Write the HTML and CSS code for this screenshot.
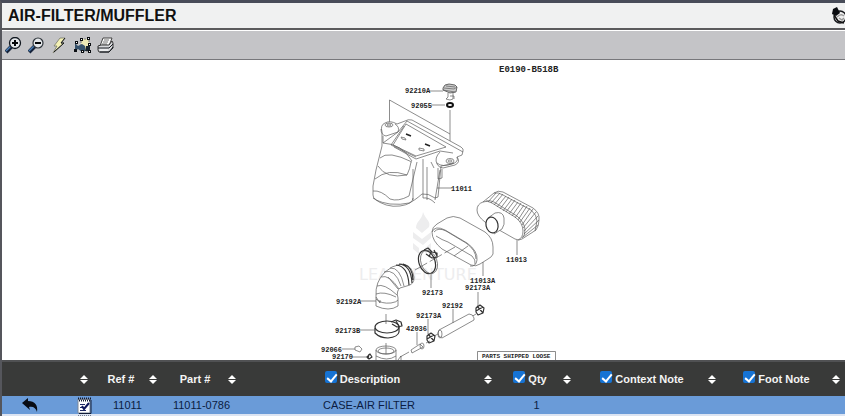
FILE: index.html
```html
<!DOCTYPE html>
<html lang="en">
<head>
<meta charset="utf-8">
<title>AIR-FILTER/MUFFLER</title>
<link rel="stylesheet" href="styles.css">
</head>
<body>
<svg class="defs" aria-hidden="true">
  <symbol id="sort" viewBox="0 0 8 9"><path d="M4 0 8 4H0zM0 5h8L4 9z" fill="#fff"/></symbol>
  <symbol id="note" viewBox="0 0 15 17">
    <path d="M1 2h12v14H1z" fill="#fff" stroke="#7d8798"/>
    <path d="M14 3v13.500H2" fill="none" stroke="#101c38"/>
    <path d="M1 1.500h13M2 3.500h12" stroke="#111a30" stroke-width="2" stroke-dasharray="1 1"/>
    <path d="M3 7.500h5M3 10.500h3M3 13.500h6" stroke="#202a66"/>
    <path d="m5 9 2 3 5-6" fill="none" stroke="#10185c" stroke-width="2"/>
  </symbol>
  <symbol id="back" viewBox="0 0 17 15"><path d="M0 5 6 0v3c7 0 10 4 9 11-1-4-4-6-8-5l1 3z" fill="#080c14"/></symbol>
</svg>
<main class="viewer">
  <header class="titlebar">
    <h1>AIR-FILTER/MUFFLER</h1>
    <button class="tool" aria-label="Options">
      <svg width="13" height="17" viewBox="0 0 13 17"><circle cx="8" cy="10" r="6" fill="#eee" stroke="#17191d" stroke-width="1.500"/><path d="M1 2 5 0l3 6-4 3-4-2z" fill="#090b0f"/><path d="m2 8 4 6 6 2" fill="none" stroke="#111" stroke-width="1.500"/><path d="M5 10q4-4 7-1M7 11l3 2 2-2" fill="none" stroke="#999" stroke-width="1.500"/></svg>
    </button>
  </header>
  <nav class="toolbar" aria-label="Diagram tools">
    <button class="tool" aria-label="Zoom in"><svg width="17" height="17" viewBox="0 0 17 17"><path d="m1 15 6-6" stroke="#15233b" stroke-width="4"/><path d="m1 14 5-5" stroke="#4d80b8" stroke-width="1.500"/><circle cx="10" cy="6" r="5.500" fill="#e4e7ea" stroke="#111820" stroke-width="1.300"/><path d="M7 6h6M10 3v6" stroke="#05070a" stroke-width="2"/></svg></button>
    <button class="tool" aria-label="Zoom out"><svg width="17" height="17" viewBox="0 0 17 17"><path d="m1 15 6-6" stroke="#15233b" stroke-width="4"/><path d="m1 14 5-5" stroke="#4d80b8" stroke-width="1.500"/><circle cx="10" cy="6" r="5" fill="#e4e7ea" stroke="#30363d" stroke-width="1.200"/><path d="M7 6h6" stroke="#05070a" stroke-width="2"/></svg></button>
    <button class="tool" aria-label="Hotspots"><svg width="17" height="17" viewBox="0 0 17 17"><path d="M9 1h5l-4 5h3L2 16l4-7H3z" fill="#f4f1b4" stroke="#77786a" stroke-width="0.800"/><path d="m14 1-4 5h3L3 15" fill="none" stroke="#16181a"/></svg></button>
    <button class="tool" aria-label="Select parts"><svg width="17" height="17" viewBox="0 0 17 17"><path d="M7 2h8v12H7z" fill="#ece8b5" stroke="#777" stroke-dasharray="2 1"/><path d="M1 6l3 3 4-2 3 2v5l-3 1-4-3-3 2z" fill="#35516b"/><path d="M12 9h4v5h-5z" fill="#17232d"/><path d="M1 4h3v3H1zM6 1h3v3H6zM13 0h3v3h-3zM14 6h3v3h-3zM0 12h3v3H0zM7 13h3v3H7zM14 13h3v3h-3z" fill="#0b0e12"/><path d="M2 5h1v1H2zM7 2h1v1H7zM14 1h1v1h-1zM15 7h1v1h-1zM8 14h1v1H8zM15 14h1v1h-1z" fill="#fff"/></svg></button>
    <button class="tool" aria-label="Print"><svg width="17" height="17" viewBox="0 0 17 17"><path d="M6 1h9l-3 8H3z" fill="#fafafa" stroke="#444"/><path d="M7 3h5M6 5h5M5 7h5" stroke="#777"/><path d="m1 9 3-1h8l3-4 1 2v5l-4 4H2l-1-2z" fill="#d9dadd" stroke="#333"/><path d="M1 11h11l4-4M3 15h9l4-5" fill="none" stroke="#171b20"/><path d="M3 13h8" stroke="#fff"/></svg></button>
  </nav>
  <section class="diagram" aria-label="Parts diagram">
    <svg class="drawing" width="301" height="300" viewBox="273 60 301 300">
      <g class="watermark"><path d="M423 212c-1 8-7 9-7 16l6 5 7-6c2-6-3-7-6-15zM413 232l9 7 9-7v6l-8 7-10-7zM413 243l6 5v6l-6-5zM431 243l-6 5v6l6-5z"/><text x="359" y="280">LEADVENTURE</text></g>
      <g class="ink">
        <!-- cap and seal -->
        <path d="M429 91h14M431 105h14M389.500 122v-22L450 134M450 110v50"/>
        <path d="M443 88q1-4 6-4l6 1 2 2-1 5-6 1-7-3z" class="shade"/><path d="M444 88l10 1 3-2M446 86l9 1M443 90l12 2M448 93v4l-2 2 4 1 3-1v-6M450 96h4v3"/>
        <ellipse cx="450" cy="105" rx="3" ry="2" class="heavy"/>
        <!-- filter case -->
        <path class="solid" d="M382 132q-2-7 3-9 5-3 12 1l8-3q3-2 7-1l49 27q3 2 2 4l-1 4-5 2q2 5-5 7l-11 2-3 31-3 1q-7-5-13-4-8 7-13 9-8 2-19 1-18-3-17-9v-9l3-16 6-24z"/>
        <path d="M381 129q0 6 5 7l12-4q2-5-3-8M383 136v7l15-11 9-11 56 31M406 124l40 23-30 9-23-11zM404 126l-13 19 25 12M383 143q19 1 29 18M394 147l22 12 24-8 13 2M380 158q8-8 32 4M378 166q8 13 29 9 3-6 4-13M375 179q13-11 32-4M373 191q8-1 17 8 8 3 19-3l4-17 4-17M373 198q13 10 27 8 13-2 13-8M413 169v31M423 159v39M427 167v33M431 162l3 6M440 170l-5 30M423 198q6-1 12 5M440 152q-6 6-3 12 2 4 6 4l12-3q6-3 2-8M437 163q5 5 17 0M438 168v11l4-1v-9"/>
        <ellipse cx="389" cy="125" rx="4" ry="2"/><ellipse cx="389" cy="125" rx="2" ry="1"/><ellipse cx="450" cy="161" rx="4" ry="2.500"/><ellipse cx="450" cy="161" rx="2" ry="1"/>
        <path class="marks" d="m406 134 5 2M425 144l5 2"/><path d="m401 137 4 1 1 2-4-1zM419 148l5 1v2l-5-1zM437 188h15"/>
        <!-- filter element -->
        <path class="solid" d="M483 202l11-9q4-3 9-1l30 16q7 5 6 12 0 6-3 10l-14 9q-3 2-7 0l-30-17q-8-6-8-12 0-6 6-8z"/>
        <path class="band" d="M483 202q4-2 9 1l23 14q8 6 8 14 0 7-5 9M486 201q4-1 8 1l23 14q8 7 8 14 0 6-3 8M494 193q4-1 9 2l28 15q6 5 6 11l-2 10"/>
        <path class="pleats" d="M496 193l-8 9M500 193l-9 10M503 194l-9 11M506 196l-9 11M509 197l-9 12M512 199l-9 12M515 200l-9 12M518 202l-9 12M521 203l-9 13M524 205l-9 13M527 206l-9 14M530 208l-10 14M533 209l-11 16M536 212l-13 16M538 216l-14 15M539 220l-15 14M538 225l-15 12"/>
        <path class="solid" d="M488 218l7-5q8-2 9 5 1 7-2 11l-8 5"/><ellipse class="solid bold" cx="492" cy="225" rx="6" ry="8" transform="rotate(-12 492 225)"/><path d="M517 240v15"/>
        <!-- sleeve -->
        <path class="solid" d="M432 232q0-5 5-8l10-6q6-3 13 0l25 14q8 6 8 15v7q-1 3-5 5l-8 5q-4 3-9 1l-29-16q-10-8-10-17z"/>
        <path d="M432 232q3-7 13-2l22 13q11 8 10 17-1 7-7 6M434 232q4-5 12-1l20 12q10 7 10 16M436 236q6 4 12 6l24 14q4 4 3 8M454 256l14-10M483 262v14"/>
        <path stroke-dasharray="14 3" d="M415 270l40-23"/>
        <!-- hose clamp -->
        <ellipse cx="427" cy="262" rx="8" ry="12" transform="rotate(-20 427 262)" class="bold"/><ellipse cx="429" cy="262" rx="8" ry="12" transform="rotate(-20 429 262)"/><path class="bold" d="M424 250l4-2 4 4 5 1v4l-5 1-6-4M431 252l-2 5M434 250l3 6"/><path d="M431 274v14"/>
        <!-- elbow hose -->
        <path class="solid" d="M376 306v-10q-1-14 9-24 6-6 16-8 9 0 12 9 3 9-3 12l-10 3q-4 3-2 10v8q-9 6-22 0z"/>
        <path d="M381 277q8-3 18 12M377 286q7-3 20 9M376 294q8-3 20 3M384 272q11-4 17 14M390 268q10-1 14 18M376 299q5 5 15 4 6-1 7-3M376 297l4 6v-3M388 277l10 12"/>
        <path class="bold" d="M396 265q12 1 13 20M399 264q12 1 13 19M403 264q10 3 10 16"/><path d="M360 301h16M386 314v10M386 343v11"/>
        <!-- lower clamp and neck -->
        <ellipse cx="387" cy="327" rx="12" ry="6" class="bold"/><path class="bold" d="M375 328v5q5 5 13 5 10-1 11-6v-5"/><path class="bold" d="M391 322l5-2 5 2 1 4-5 1-5-3M396 321l3 5"/><path d="M360 330h15"/>
        <ellipse cx="386" cy="350" rx="10" ry="4"/><ellipse cx="386" cy="351" rx="8" ry="3"/><path d="M376 350v10M396 350v10M376 356q11 6 20 0M342 349h13M352 357h15M355 347l4-1 3 3-2 3-5-2zM398 360l3-4v4"/><path class="bold" d="M367 357l3-3 2 3-3 2zM369 354l-1 5"/>
        <!-- bolt, clips and tube -->
        <path class="solid" d="m411 350 9-6 3 3-11 6z"/><ellipse cx="422" cy="346" rx="2" ry="3"/><path d="M417 332v13M400 357l9-5M426 343l4-2M434 336l4-2M471 317l5-3"/>
        <path class="bold" d="m427 336 4-3 4 3-1 5-5 2-2-3zM428 334l6 7M427 339l7-4"/><path class="solid" d="m439 330 30-16q4 0 5 4v2l-32 18q-4-1-4-5z"/><ellipse cx="440" cy="334" rx="2" ry="4"/><path d="M453 309v14M428 319v15M478 292v14"/><path class="bold" d="m476 308 4-3 4 3-1 5-5 2-2-3zM477 306l6 7M476 311l7-4"/>
        <path d="M477.500 360v-8.500h78v8.500"/>
      </g>
      <g class="labels">
        <text x="405" y="93">92210A</text><text x="411" y="108">92055</text><text x="451" y="191">11011</text><text x="506" y="262">11013</text><text x="470" y="283">11013A</text><text x="465" y="290">92173A</text><text x="422" y="295">92173</text><text x="336" y="304">92192A</text><text x="442" y="308">92192</text><text x="416" y="318">92173A</text><text x="335" y="333">92173B</text><text x="406" y="331">42036</text><text x="321" y="352">92066</text><text x="332" y="359">92170</text>
        <text class="sheet" x="499" y="72">E0190-B518B</text><text class="stamp" x="482" y="358">PARTS SHIPPED LOOSE</text>
      </g>
    </svg>
  </section>
  <table class="parts">
    <colgroup><col class="c-act"><col class="c-ref"><col class="c-qty"><col><col class="c-qty"><col class="c-context"><col class="c-foot"></colgroup>
    <thead><tr>
      <th><div class="head"><span></span><button aria-label="Sort"><svg><use href="#sort"/></svg></button></div></th>
      <th><div class="head"><span>Ref #</span><button aria-label="Sort by ref"><svg><use href="#sort"/></svg></button></div></th>
      <th><div class="head"><span>Part #</span><button aria-label="Sort by part"><svg><use href="#sort"/></svg></button></div></th>
      <th><div class="head"><label><input type="checkbox" checked>Description</label><button aria-label="Sort by description"><svg><use href="#sort"/></svg></button></div></th>
      <th><div class="head"><label><input type="checkbox" checked>Qty</label><button aria-label="Sort by quantity"><svg><use href="#sort"/></svg></button></div></th>
      <th><div class="head"><label><input type="checkbox" checked>Context Note</label><button aria-label="Sort by context note"><svg><use href="#sort"/></svg></button></div></th>
      <th><div class="head"><label><input type="checkbox" checked>Foot Note</label><button aria-label="Sort by foot note"><svg><use href="#sort"/></svg></button></div></th>
    </tr></thead>
    <tbody>
      <tr class="selected"><td><div class="actions"><button aria-label="Back"><svg width="17" height="15"><use href="#back"/></svg></button><button aria-label="Notes"><svg width="15" height="17"><use href="#note"/></svg></button></div></td><td>11011</td><td>11011-0786</td><td>CASE-AIR FILTER</td><td>1</td><td></td><td></td></tr>
      <tr><td><div class="actions next"><button aria-label="Notes"><svg width="15" height="17"><use href="#note"/></svg></button></div></td><td></td><td></td><td></td><td></td><td></td><td></td></tr>
    </tbody>
  </table>
</main>
</body>
</html>
```
FILE: styles.css
```css
* { box-sizing: border-box; }
body {
  margin: 0;
  height: 100vh;
  overflow: hidden;
  background: #fff;
  font-family: "Liberation Sans", Arial, sans-serif;
}
button { display: block; padding: 0; border: 0; background: none; }
button svg { display: block; }
.defs { position: absolute; width: 0; height: 0; }
.viewer { border-top: 3px solid #484c59; border-left: 2px solid #55565c; }
.titlebar {
  display: flex;
  align-items: center;
  justify-content: space-between;
  height: 27px;
  padding-left: 6px;
  background: #f0f1f1;
  border-bottom: 2px solid #5b5b5d;
}
h1 { margin: 0; font-size: 16px; line-height: 24px; color: #111; }
.toolbar {
  display: flex;
  align-items: center;
  gap: 6px;
  height: 30px;
  padding-left: 3px;
  background: #c4c4c7;
  border-top: 1px solid #fff;
  border-bottom: 1px solid #77777b;
}
.diagram { background: #fff; }
.drawing { display: block; margin: 0 auto; }
.ink { fill: none; stroke: #5c5c5c; stroke-width: 0.7; stroke-linejoin: round; }
.ink .solid { fill: #fff; }
.ink .shade { fill: #ccc; stroke: #333; }
.ink .bold { stroke: #333; stroke-width: 1.2; }
.ink .heavy { stroke: #111; stroke-width: 2; }
.ink .marks { stroke: #222; stroke-width: 1.5; }
.labels { font: bold 7px "Liberation Mono", monospace; fill: #222; }
.labels .sheet { font-size: 9px; }
.labels .stamp { font-size: 6px; }
.watermark { fill: #ededee; font: 16px "DejaVu Sans", sans-serif; }
.parts {
  width: 100%;
  table-layout: fixed;
  border-collapse: collapse;
  border-top: 2px solid #505153;
  background: #dce4f2;
  color: #0b1c42;
  font-size: 11px;
}
.c-act { width: 91px; }
.c-ref { width: 69px; }
.c-qty { width: 79px; }
.c-context { width: 145px; }
.c-foot { width: 124px; }
th { height: 35px; padding: 0; background: #393a39; color: #f4f4f4; }
td { height: 18px; padding: 0; line-height: 16px; text-align: center; }
.selected { background: #6a9bd8; }
.head { display: flex; align-items: center; padding-right: 5px; }
.head > :first-child { flex: 1; }
.head label { display: flex; align-items: center; justify-content: center; gap: 3px; }
.head svg { width: 8px; height: 9px; }
.head input {
  appearance: none;
  width: 12px;
  height: 12px;
  margin: 0 0 4px;
  border-radius: 2px;
  background: #1673d4;
}
.head input:checked::after {
  content: "";
  display: block;
  width: 4px;
  height: 8px;
  margin: 1px 4px;
  border: solid #fff;
  border-width: 0 2px 2px 0;
  transform: rotate(40deg);
}
.actions { display: flex; align-items: center; justify-content: space-between; height: 17px; padding: 0 1px 0 20px; }
.next { justify-content: flex-end; }
```
